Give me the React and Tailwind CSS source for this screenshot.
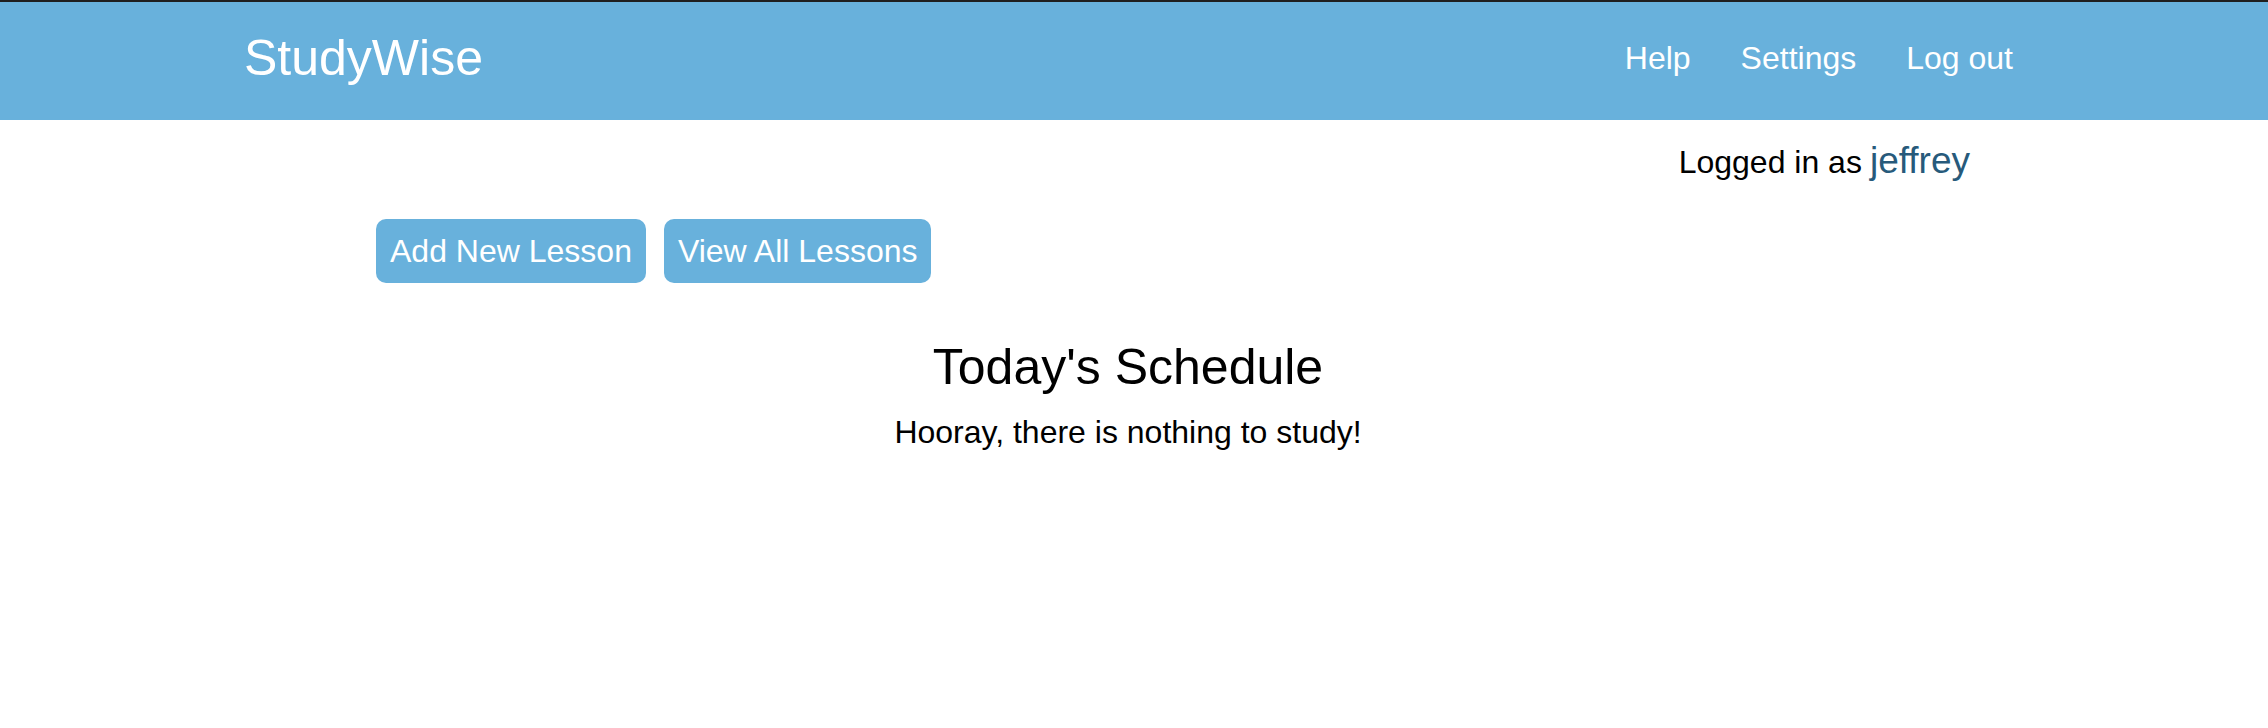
export default function App() {
  const navLinks = ['Help', 'Settings', 'Log out']

  return (
    <div className="min-h-[728px] bg-white border-t-2 border-[#1f1f1f] font-['Liberation_Sans',Arial,sans-serif] text-black">
      <header className="h-[118px] bg-[#68b1dc] flex items-start justify-between pl-[244px] pr-[255px] text-white">
        <a href="#" className="mt-[28px] text-[50px] leading-[57px]">StudyWise</a>
        <nav className="mt-[38px] flex gap-[50px] text-[32px] leading-[37px]">
          {navLinks.map(link => (
            <a key={link} href="#">{link}</a>
          ))}
        </nav>
      </header>

      <div className="mt-[22px] pr-[298px] flex justify-end items-baseline gap-[8px]">
        <span className="text-[32px] leading-none">Logged in as</span>
        <span className="text-[37px] leading-none text-[#275a7b]">jeffrey</span>
      </div>

      <div className="pl-[376px] pr-[388px]">
        <div className="mt-[40px] flex gap-[18px]">
          <button className="bg-[#68b1dc] text-white text-[32px] leading-[36px] px-[14px] py-[14px] rounded-[10px]">
            Add New Lesson
          </button>
          <button className="bg-[#68b1dc] text-white text-[32px] leading-[36px] px-[14px] py-[14px] rounded-[10px]">
            View All Lessons
          </button>
        </div>

        <h2 className="mt-[55px] text-center text-[50px] leading-[58px]">Today's Schedule</h2>
        <p className="mt-[18px] text-center text-[32px] leading-[36px]">Hooray, there is nothing to study!</p>
      </div>
    </div>
  )
}
